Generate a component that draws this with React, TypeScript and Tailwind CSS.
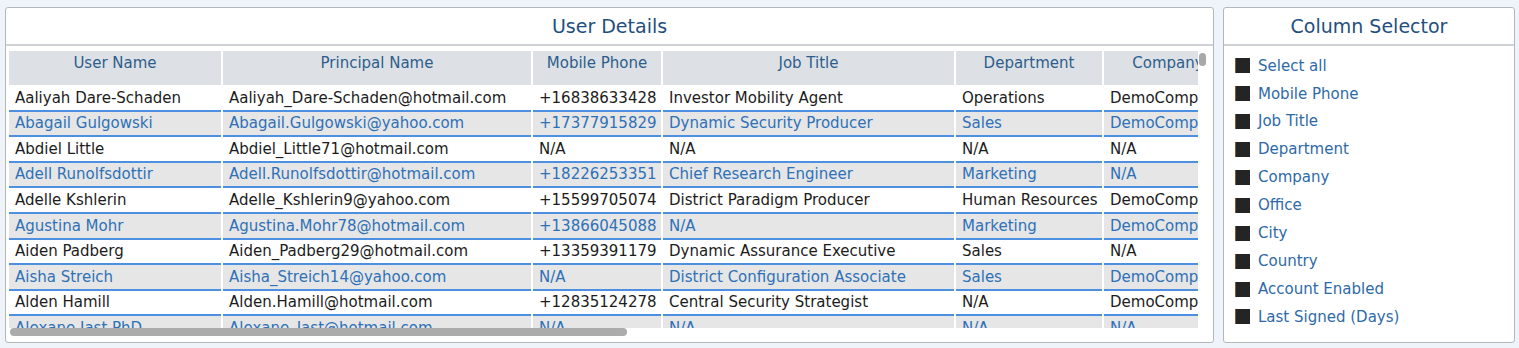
import React from "react";

type Row = {
  name: string;
  principal: string;
  phone: string;
  job: string;
  dept: string;
  company: string;
};

const rows: Row[] = [
  { name: "Aaliyah Dare-Schaden", principal: "Aaliyah_Dare-Schaden@hotmail.com", phone: "+16838633428", job: "Investor Mobility Agent", dept: "Operations", company: "DemoCompany" },
  { name: "Abagail Gulgowski", principal: "Abagail.Gulgowski@yahoo.com", phone: "+17377915829", job: "Dynamic Security Producer", dept: "Sales", company: "DemoCompany" },
  { name: "Abdiel Little", principal: "Abdiel_Little71@hotmail.com", phone: "N/A", job: "N/A", dept: "N/A", company: "N/A" },
  { name: "Adell Runolfsdottir", principal: "Adell.Runolfsdottir@hotmail.com", phone: "+18226253351", job: "Chief Research Engineer", dept: "Marketing", company: "N/A" },
  { name: "Adelle Kshlerin", principal: "Adelle_Kshlerin9@yahoo.com", phone: "+15599705074", job: "District Paradigm Producer", dept: "Human Resources", company: "DemoCompany" },
  { name: "Agustina Mohr", principal: "Agustina.Mohr78@hotmail.com", phone: "+13866045088", job: "N/A", dept: "Marketing", company: "DemoCompany" },
  { name: "Aiden Padberg", principal: "Aiden_Padberg29@hotmail.com", phone: "+13359391179", job: "Dynamic Assurance Executive", dept: "Sales", company: "N/A" },
  { name: "Aisha Streich", principal: "Aisha_Streich14@yahoo.com", phone: "N/A", job: "District Configuration Associate", dept: "Sales", company: "DemoCompany" },
  { name: "Alden Hamill", principal: "Alden.Hamill@hotmail.com", phone: "+12835124278", job: "Central Security Strategist", dept: "N/A", company: "DemoCompany" },
  { name: "Alexane Jast PhD", principal: "Alexane_Jast@hotmail.com", phone: "N/A", job: "N/A", dept: "N/A", company: "N/A" },
];

const columns = ["Select all", "Mobile Phone", "Job Title", "Department", "Company", "Office", "City", "Country", "Account Enabled", "Last Signed (Days)"];

const font = "font-['Tahoma','DejaVu_Sans',sans-serif]";

function Cell({ w, children, odd }: { w: string; children: React.ReactNode; odd: boolean }) {
  return (
    <div
      className={`${w} shrink-0 h-full flex items-center px-[6px] whitespace-nowrap overflow-hidden border-b-2 border-[#4d8fe0] ${
        odd ? "bg-[#e6e6e6] text-[#2e71b8]" : "bg-white text-[#1c1c1c]"
      }`}
    >
      {children}
    </div>
  );
}

function HeadCell({ w, children }: { w: string; children: React.ReactNode }) {
  return (
    <div className={`${w} shrink-0 h-full flex items-start pt-[1px] justify-center bg-[#dde1e5] text-[#2d5d8c] whitespace-nowrap overflow-hidden`}>
      {children}
    </div>
  );
}

function UserTable() {
  return (
    <div className="relative flex-1 ml-[3px] mr-[4px] mt-[5px] overflow-hidden">
      <div className="flex flex-col w-[1191px] overflow-hidden text-[15px]">
        <div className="flex gap-[2px] h-[34px] mb-[1px]">
          <HeadCell w="w-[212px]">User Name</HeadCell>
          <HeadCell w="w-[308px]">Principal Name</HeadCell>
          <HeadCell w="w-[128px]">Mobile Phone</HeadCell>
          <HeadCell w="w-[291px]">Job Title</HeadCell>
          <HeadCell w="w-[146px]">Department</HeadCell>
          <HeadCell w="w-[128px]">Company</HeadCell>
        </div>
        {rows.map((r, i) => (
          <div key={r.name} className="flex gap-[2px] h-[25.6px]">
            <Cell w="w-[212px]" odd={i % 2 === 1}>{r.name}</Cell>
            <Cell w="w-[308px]" odd={i % 2 === 1}>{r.principal}</Cell>
            <Cell w="w-[128px]" odd={i % 2 === 1}>{r.phone}</Cell>
            <Cell w="w-[291px]" odd={i % 2 === 1}>{r.job}</Cell>
            <Cell w="w-[146px]" odd={i % 2 === 1}>{r.dept}</Cell>
            <Cell w="w-[128px]" odd={i % 2 === 1}>{r.company}</Cell>
          </div>
        ))}
      </div>
      {/* overlay scrollbars */}
      <div className="absolute top-0 right-0 w-[11px] h-full bg-white" />
      <div className="absolute top-[2px] right-[3px] w-[7px] h-[13px] rounded-full bg-[#a8a8a8]" />
      <div className="absolute bottom-0 left-0 right-0 h-[10px] bg-white" />
      <div className="absolute bottom-[2px] left-[1px] w-[617px] h-[8px] rounded-full bg-[#ababab]" />
    </div>
  );
}

export default function App() {
  return (
    <div className={`w-[1519px] h-[348px] bg-[#eff4fb] flex gap-[9px] pl-[5px] pt-[7px] ${font}`}>
      <div className="w-[1209px] h-[336px] bg-white border border-[#b4b8bd] rounded-[3px] flex flex-col">
        <div className="h-[38px] shrink-0 flex items-center justify-center text-[19px] text-[#1f4f7e] border-b-2 border-[#cfd2d6]">
          User Details
        </div>
        <div className="flex-1 flex flex-col pb-[4px] min-h-0">
          <UserTable />
        </div>
      </div>
      <div className="w-[292px] h-[336px] bg-white border border-[#b4b8bd] rounded-[3px] flex flex-col">
        <div className="h-[38px] shrink-0 flex items-center justify-center text-[19px] text-[#1f4f7e] border-b-2 border-[#cfd2d6]">
          Column Selector
        </div>
        <div className="flex flex-col pt-[6px] pl-[11px]">
          {columns.map((c) => (
            <div key={c} className="h-[27.9px] flex items-center gap-[8px] text-[15px] text-[#2e6aa8]">
              <span className="w-[15px] h-[15px] bg-[#242424] border-l border-[#8a5a2a]" />
              <span>{c}</span>
            </div>
          ))}
        </div>
      </div>
    </div>
  );
}
